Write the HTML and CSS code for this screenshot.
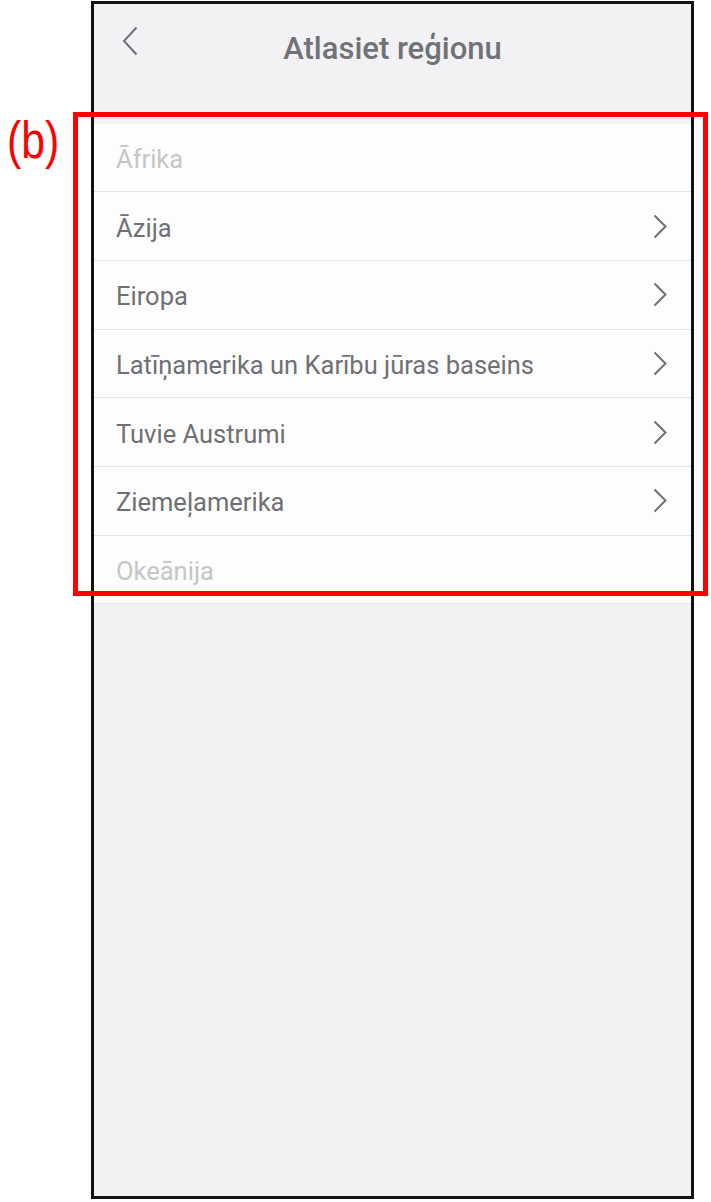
FILE: index.html
```html
<!DOCTYPE html>
<html lang="lv">
<head>
    <meta charset="UTF-8">
    <meta name="viewport" content="width=device-width, initial-scale=1.0">
    <title>Atlasiet reģionu</title>
    <link rel="stylesheet" href="styles.css">
</head>

<body>
    <div class="phone">
        <header class="top-bar">
            <a class="back" href="#">
                <svg width="16" height="30" viewBox="0 0 16 30">
                    <polyline points="14.5,1.5 2,15 14.5,28.5" fill="none" stroke="#6f7074" stroke-width="2"/>
                </svg>
            </a>
            <h1>Atlasiet reģionu</h1>
        </header>

        <ul class="regions">
            <li class="disabled">Āfrika</li>
            <li>Āzija <svg class="chev" viewBox="0 0 14 25"><polyline points="1.5,1.5 12.5,12.5 1.5,23.5"/></svg></li>
            <li>Eiropa <svg class="chev" viewBox="0 0 14 25"><polyline points="1.5,1.5 12.5,12.5 1.5,23.5"/></svg></li>
            <li>Latīņamerika un Karību jūras baseins <svg class="chev" viewBox="0 0 14 25"><polyline points="1.5,1.5 12.5,12.5 1.5,23.5"/></svg></li>
            <li>Tuvie Austrumi <svg class="chev" viewBox="0 0 14 25"><polyline points="1.5,1.5 12.5,12.5 1.5,23.5"/></svg></li>
            <li>Ziemeļamerika <svg class="chev" viewBox="0 0 14 25"><polyline points="1.5,1.5 12.5,12.5 1.5,23.5"/></svg></li>
            <li class="disabled">Okeānija</li>
        </ul>
    </div>

    <!-- annotation overlay -->
    <div class="mark-label">(b)</div>
    <div class="mark-box"></div>
</body>
</html>
```

FILE: styles.css
```css
body {
    margin: 0;
    padding: 1px 0 0 91px;
    background: #fff;
    font-family: Roboto, "Noto Sans", Arial, sans-serif;
    position: relative;
    width: 620px;
    height: 1201px;
    overflow: hidden;
}

.phone {
    width: 597px;
    height: 1192px;
    border: 3px solid #111;
    background: #f2f2f4;
}

.top-bar {
    height: 119.5px;
    position: relative;
    display: flex;
    justify-content: center;
    box-sizing: border-box;
    padding-top: 25px;
}

.top-bar h1 {
    margin: 0;
    font-size: 31px;
    font-weight: 500;
    color: #717276;
    line-height: 40px;
}

.back {
    position: absolute;
    left: 28px;
    top: 22px;
}

.regions {
    list-style-type: none;
    margin: 0;
    padding: 0;
    background: #fdfdfd;
}

.regions li {
    height: 68.7px;
    box-sizing: border-box;
    border-bottom: 1px solid #e4e4e6;
    display: flex;
    align-items: center;
    justify-content: space-between;
    padding: 3px 24px 0 22px;
    font-size: 25.5px;
    color: #6f7074;
}

.regions li.disabled {
    color: #c6c6c8;
}

.chev {
    width: 14px;
    height: 25px;
    margin-top: -3px;
    fill: none;
    stroke: #6f7074;
    stroke-width: 2;
}

.mark-label {
    position: absolute;
    left: 7px;
    top: 114px;
    font-family: "Liberation Sans", Arial, sans-serif;
    font-size: 52px;
    line-height: 1;
    color: #ff0000;
    transform: scaleX(0.82);
    transform-origin: left top;
}

.mark-box {
    position: absolute;
    left: 73px;
    top: 112px;
    width: 625px;
    height: 474px;
    border: 5px solid #ff0000;
}
```
